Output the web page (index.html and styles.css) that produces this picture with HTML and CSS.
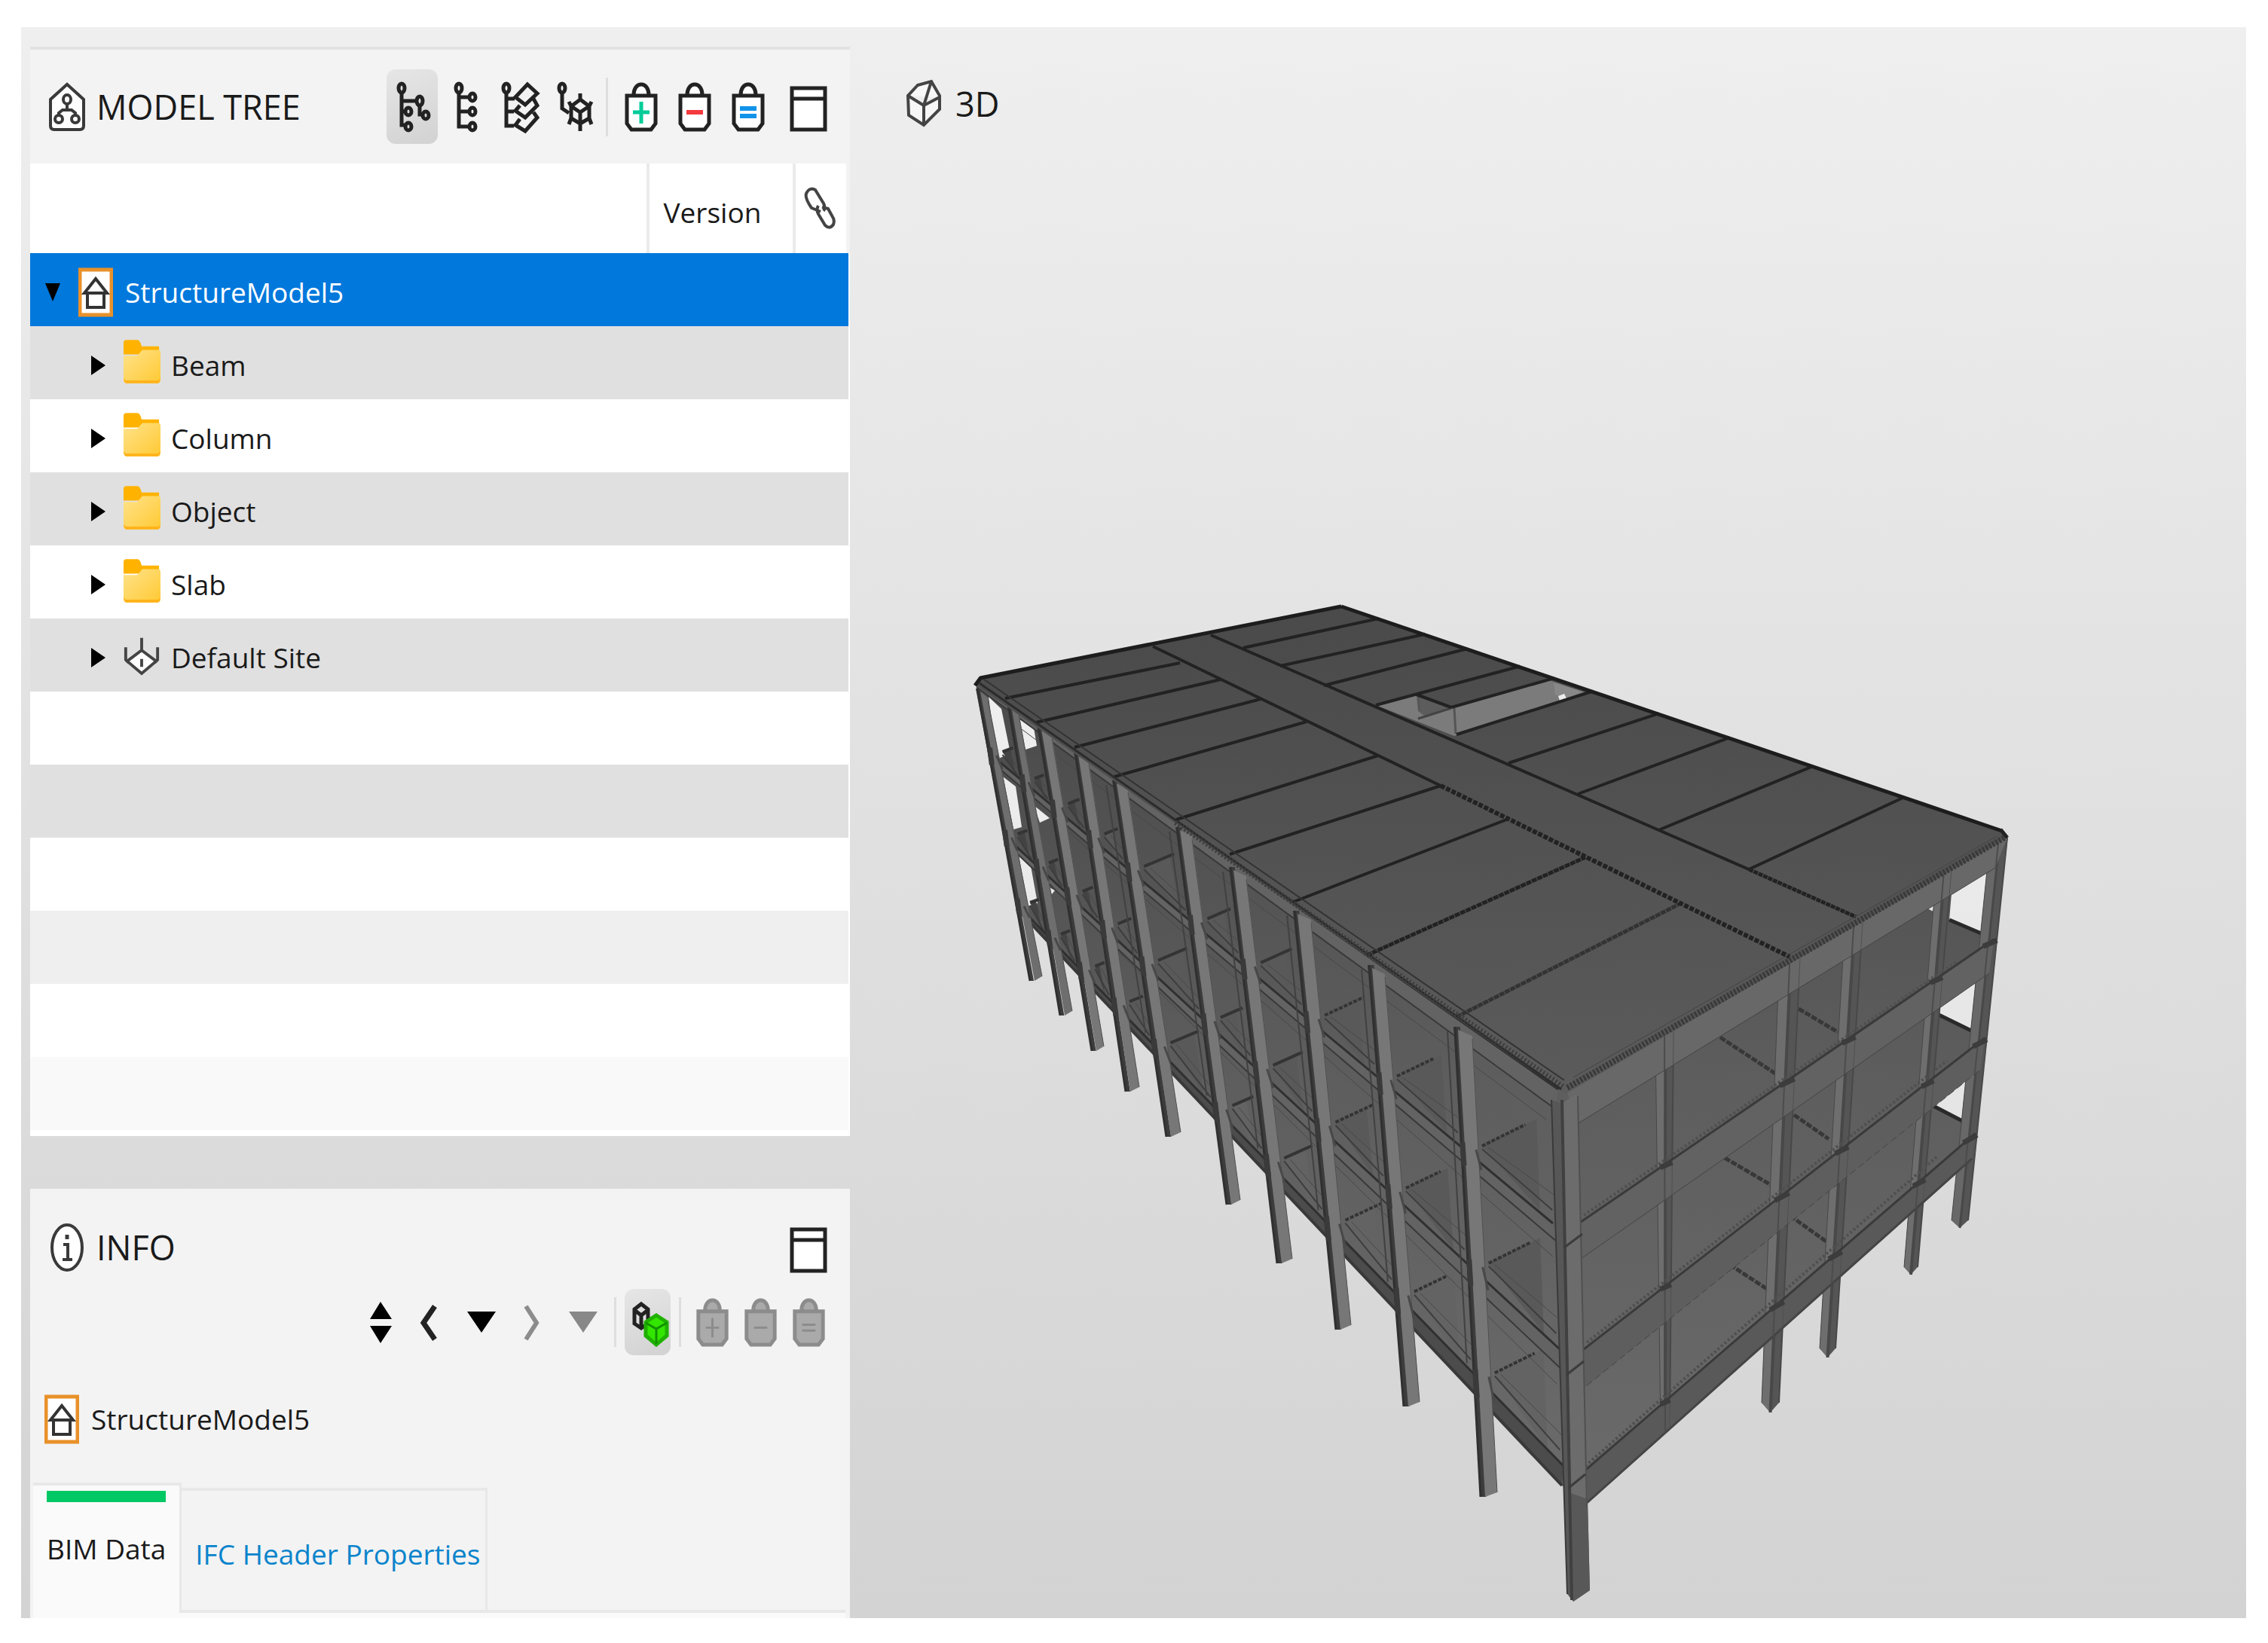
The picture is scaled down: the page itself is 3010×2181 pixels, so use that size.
FILE: index.html
```html
<!DOCTYPE html>
<html lang="en">
<head>
<meta charset="utf-8">
<title>StructureModel5</title>
<link rel="stylesheet" href="styles.css">
</head>
<body>
<svg class="defs" aria-hidden="true">
  <symbol id="i-bag" viewBox="0 0 68 99"><path d="M24 34C24 26 28 20 34 20S44 26 44 34" /><path d="M15 35H53V72L47 80H21L15 72Z"/></symbol>
  <symbol id="i-window" viewBox="0 0 68 99"><path d="M12 25H56V80H12Z" fill="#fff"/><path d="M12 39H56"/></symbol>
  <symbol id="i-folder" viewBox="0 0 52 60"><path d="M1 4Q1 0 5 0H20Q24 0 26 9H50V20H1Z" fill="#ffb300"/><path d="M1 22H20L27 14H49Q52 14 52 18V54Q52 60 48 60H5Q1 60 1 54Z" fill="url(#gold)"/><path d="M1 53Q2 60 5 60H48Q51 60 52 53L49 56H4Z" fill="#ffb31a"/></symbol>
  <symbol id="i-model" viewBox="0 0 46 66"><rect x="2" y="3" width="42" height="60" fill="#fff" stroke="#e8912a" stroke-width="5"/><path d="M8 34L23 15L38 34Z M12 34V53H34V34 M7 34H39" fill="none" stroke="#333" stroke-width="4"/></symbol>
  <linearGradient id="gold" x1="0" y1="0" x2="1" y2="1"><stop offset="0" stop-color="#ffe28a"/><stop offset="1" stop-color="#ffc933"/></linearGradient>
</svg>

<div class="app">
  <aside class="sidebar">
    <section class="panel tree">
      <header class="panel-head">
        <svg class="head-icon" viewBox="0 0 50 66"><path d="M25 3L47 23V58Q47 63 42 63H8Q3 63 3 58V23Z" fill="#fff"/><ellipse cx="25" cy="23" rx="5" ry="6"/><ellipse cx="14" cy="49" rx="5" ry="5"/><ellipse cx="36" cy="49" rx="5" ry="5"/><path d="M25 29V37M14 44V41L19 37H31L36 41V44"/></svg>
        <h2>MODEL TREE</h2>
        <div class="toolbar">
          <button class="tool on" aria-label="Tree view"><svg viewBox="0 0 68 99"><path d="M20 33V74H24M20 42H39M20 56H24M44 49V60H47"/><ellipse cx="20" cy="25" rx="4" ry="6"/><ellipse cx="44" cy="42" rx="4" ry="6"/><ellipse cx="52" cy="61" rx="4" ry="5"/><ellipse cx="29" cy="56" rx="4" ry="5"/><ellipse cx="29" cy="76" rx="4" ry="5"/></svg></button>
          <button class="tool" aria-label="Flat view"><svg viewBox="0 0 68 99"><path d="M25 33V76H38M25 37H38M25 56H38"/><ellipse cx="25" cy="25" rx="4" ry="6"/><ellipse cx="43" cy="37" rx="4" ry="5"/><ellipse cx="43" cy="56" rx="4" ry="5"/><ellipse cx="43" cy="76" rx="4" ry="5"/></svg></button>
          <button class="tool" aria-label="Layer view"><svg viewBox="0 0 68 99"><path d="M17 33V75H27M17 39H28M17 56H27"/><ellipse cx="17" cy="25" rx="4" ry="6"/><path d="M45 20L58 32L42 47L29 37ZM53 39L58 48L42 64L29 55L35 48M53 57L58 64L42 82L29 74L35 66"/></svg></button>
          <button class="tool" aria-label="Object view"><svg viewBox="0 0 68 99"><path d="M20 33V52L29 58"/><ellipse cx="20" cy="25" rx="4" ry="6"/><path d="M44 40L56 49V65L44 72L32 65V49ZM32 49L44 57L56 49M44 57V72M44 32V40M44 72V82M56 49L59 43M32 49L29 43M56 65L59 73M32 65L29 73"/></svg></button>
          <span class="sep"></span>
          <button class="tool" aria-label="Add"><svg viewBox="0 0 68 99"><use href="#i-bag" fill="#fff"/><path d="M34 43V72M23 57H45" stroke="#0c9" stroke-width="5"/></svg></button>
          <button class="tool" aria-label="Remove"><svg viewBox="0 0 68 99"><use href="#i-bag" fill="#fff"/><path d="M23 57H45" stroke="#f43a3f" stroke-width="6"/></svg></button>
          <button class="tool" aria-label="Set equal"><svg viewBox="0 0 68 99"><use href="#i-bag" fill="#fff"/><path d="M23 52H45M23 62H45" stroke="#1193ea" stroke-width="6"/></svg></button>
          <button class="tool apart" aria-label="Maximize"><svg viewBox="0 0 68 99"><use href="#i-window"/></svg></button>
        </div>
      </header>
      <table>
        <colgroup><col><col class="c-version"><col class="c-link"></colgroup>
        <thead><tr><th></th><th>Version</th><th><svg class="link" viewBox="0 0 44 58"><path d="M23 33L11 28Q2 15 4 9Q8 0 16 4L27 22Q30 28 27 32M20 25Q17 30 20 36L29 51Q35 57 40 50Q42 44 39 40L33 29L25 27"/></svg></th></tr></thead>
        <tbody>
          <tr class="selected"><td colspan="3"><div class="node"><svg class="arrow" viewBox="0 0 20 26"><path d="M0 1H20L10 25Z"/></svg><svg class="i-model"><use href="#i-model"/></svg><span>StructureModel5</span></div></td></tr>
          <tr><td colspan="3"><div class="node child"><svg class="arrow" viewBox="0 0 20 26"><path d="M1 0L20 13L1 26Z"/></svg><svg class="i-node"><use href="#i-folder"/></svg><span>Beam</span></div></td></tr>
          <tr><td colspan="3"><div class="node child"><svg class="arrow" viewBox="0 0 20 26"><path d="M1 0L20 13L1 26Z"/></svg><svg class="i-node"><use href="#i-folder"/></svg><span>Column</span></div></td></tr>
          <tr><td colspan="3"><div class="node child"><svg class="arrow" viewBox="0 0 20 26"><path d="M1 0L20 13L1 26Z"/></svg><svg class="i-node"><use href="#i-folder"/></svg><span>Object</span></div></td></tr>
          <tr><td colspan="3"><div class="node child"><svg class="arrow" viewBox="0 0 20 26"><path d="M1 0L20 13L1 26Z"/></svg><svg class="i-node"><use href="#i-folder"/></svg><span>Slab</span></div></td></tr>
          <tr><td colspan="3"><div class="node child"><svg class="arrow" viewBox="0 0 20 26"><path d="M1 0L20 13L1 26Z"/></svg><svg class="i-node site" viewBox="0 0 52 60"><path d="M26 25L46 40L26 57L6 40Z" fill="#fff"/><path d="M26 8V25M26 37V48M4 21V38L8 42M48 21V38L44 42"/></svg><span>Default Site</span></div></td></tr>
          <tr><td colspan="3"></td></tr>
          <tr class="fade1"><td colspan="3"></td></tr>
          <tr><td colspan="3"></td></tr>
          <tr class="fade2"><td colspan="3"></td></tr>
          <tr><td colspan="3"></td></tr>
          <tr class="fade3"><td colspan="3"></td></tr>
        </tbody>
      </table>
    </section>

    <section class="panel info">
      <header class="panel-head">
        <svg class="head-icon" viewBox="0 0 50 66"><ellipse cx="25" cy="33" rx="20" ry="30" fill="#fff"/><path d="M20 29H26V48M19 49H32"/><path d="M25 16V22" stroke-width="5"/></svg>
        <h2>INFO</h2>
        <div class="toolbar"><button class="tool" aria-label="Maximize"><svg viewBox="0 0 68 99"><use href="#i-window"/></svg></button></div>
      </header>
      <div class="nav">
        <button class="tool" aria-label="Up or down"><svg class="solid" viewBox="0 0 61 88"><path d="M30 17L45 40H16ZM16 49H45L30 72Z"/></svg></button>
        <button class="tool" aria-label="Previous"><svg viewBox="0 0 61 88"><path d="M35 23L20 45L35 67" stroke-width="7"/></svg></button>
        <button class="tool" aria-label="Previous list"><svg class="solid" viewBox="0 0 61 88"><path d="M11 30H49L30 58Z"/></svg></button>
        <button class="tool dim" aria-label="Next"><svg viewBox="0 0 61 88"><path d="M22 23L36 45L22 67" stroke-width="6"/></svg></button>
        <button class="tool dim" aria-label="Next list"><svg class="solid" viewBox="0 0 61 88"><path d="M12 30H50L31 58Z"/></svg></button>
        <span class="sep"></span>
        <button class="tool on" aria-label="Linked objects"><svg viewBox="0 0 61 88"><path d="M22 20L31 27V46L22 52L13 46V27ZM13 28L22 35L31 28M22 35V52" fill="#ddd"/><path d="M42 35L56 44V62L42 74L28 62V44Z" fill="#33e600" stroke="#20b000"/><path d="M28 45L42 53L56 45M42 53V73" stroke="#129000" stroke-width="3"/></svg></button>
        <span class="sep"></span>
        <button class="tool dim" aria-label="Add" disabled><svg viewBox="3 6 62 87"><use href="#i-bag" width="68" height="99" fill="#aaa"/><path d="M34 44V70M25 57H43" stroke-width="3"/></svg></button>
        <button class="tool dim" aria-label="Remove" disabled><svg viewBox="3 6 62 87"><use href="#i-bag" width="68" height="99" fill="#aaa"/><path d="M25 57H43" stroke-width="3"/></svg></button>
        <button class="tool dim" aria-label="Set equal" disabled><svg viewBox="3 6 62 87"><use href="#i-bag" width="68" height="99" fill="#aaa"/><path d="M25 53H43M25 61H43" stroke-width="3"/></svg></button>
      </div>
      <div class="model"><svg class="i-model"><use href="#i-model"/></svg><span>StructureModel5</span></div>
      <nav class="tabs">
        <a class="tab current" href="#bim">BIM Data</a>
        <a class="tab" href="#ifc">IFC Header Properties</a>
      </nav>
      <div class="tab-body" id="bim"></div>
    </section>
  </aside>

  <main class="view">
    <header class="view-head">
      <svg class="cube" viewBox="0 0 48 64"><path d="M34 3L45 22V40L24 61L4 48L3 22L16 8ZM3 22L24 35L45 24M24 35V61M34 3L24 35" /></svg>
      <h2>3D</h2>
    </header>
    <svg id="scene" viewBox="1128 200 1853 1948" role="img" aria-label="Structural frame"></svg>
  </main>
</div>
<script src="scene.js"></script>
</body>
</html>
```
FILE: styles.css
```css
* { box-sizing: border-box; }
body {
  margin: 0;
  background: #fff;
  color: #1a1a1a;
  font-family: "Open Sans", "Noto Sans", sans-serif;
  font-size: 37px;
  line-height: 56px;
}
.defs { position: absolute; width: 0; height: 0; }
h2 { margin: 0; font-size: 45px; font-weight: 400; }
button { padding: 0; border: 0; background: none; color: inherit; font: inherit; }

.app {
  display: grid;
  grid-template-columns: 1100fr 1853fr;
  min-height: calc(100vh - 69px);
  margin: 36px 29px 33px 28px;
  background: linear-gradient(#efefef, #e3e3e3 40%, #d3d3d3);
}
.sidebar {
  display: flex;
  flex-direction: column;
  gap: 70px;
  padding: 26px 0 0 12px;
}
.panel { background: #f3f3f3; }
.tree { border-top: 4px solid #e2e2e2; border-bottom: 8px solid #fff; }
.info { flex: 1; display: flex; flex-direction: column; }

.panel-head {
  display: flex;
  align-items: center;
  gap: 14px;
  height: 151px;
  padding: 0 21px 0 24px;
}
.info .panel-head { height: 133px; padding-top: 23px; }
.head-icon { width: 50px; height: 66px; fill: none; stroke: #3a3a3a; stroke-width: 4px; }
.toolbar, .nav { display: flex; align-items: center; justify-content: flex-end; }
.toolbar { gap: 3px; margin-left: auto; }
.tool { display: block; width: 68px; height: 99px; border-radius: 12px; }
.tool svg {
  display: block;
  width: 100%;
  height: 100%;
  fill: none;
  stroke: #222;
  stroke-width: 5px;
}
.tool .solid { fill: #000; stroke: none; }
.tool.on { background: linear-gradient(160deg, #e6e6e6, #d2d2d2); }
.tool.apart { margin-left: 9px; }
.tool.dim svg { stroke: #8c8c8c; }
.tool.dim .solid { fill: #888; stroke: none; }
.sep { width: 3px; height: 78px; margin: 0 7px; background: #dedede; }

.nav { gap: 6px; padding-right: 24px; }
.nav .tool { width: 61px; height: 88px; }
.nav .sep { height: 66px; margin: 0 5px; }
.nav .sep ~ .tool + .tool { margin-left: -3px; }

table { width: 100%; border-collapse: collapse; table-layout: fixed; background: #fff; }
.c-version { width: 194px; }
.c-link { width: 72px; }
th { height: 119px; padding: 10px 0 0; font-weight: 400; text-align: left; }
th + th { border-left: 4px solid #ebebeb; padding-left: 19px; }
th:last-child { padding: 0 0 0 10px; border-right: 5px solid #f3f3f3; }
.link { display: block; width: 44px; height: 58px; fill: none; stroke: #444; stroke-width: 4px; }
td { height: 97px; padding: 0; }
tbody tr:nth-child(even) { background: #e0e0e0; }
tbody .selected { background: #0078dc; color: #fff; }
tbody .fade1 { background: #e3e3e3; }
tbody tr.fade2 { background: #efefef; }
tbody tr.fade3 { background: #f9f9f9; }
.node { display: flex; align-items: center; padding: 6px 0 0 20px; }
.node.child { padding-left: 80px; }
.arrow { width: 20px; height: 26px; margin-right: 24px; fill: #000; }
.i-model { width: 46px; height: 66px; margin-right: 16px; }
.i-node { width: 50px; height: 60px; margin: 0 14px 10px 0; }
.child .arrow { margin-right: 23px; }
.site { fill: none; stroke: #444; stroke-width: 4px; }

.model { display: flex; align-items: center; height: 169px; padding-left: 19px; }
.tabs { display: flex; height: 169px; padding-left: 4px; }
.tab {
  margin-top: 7px;
  padding: 56px 6px 0 18px;
  border: solid #e8e8e8;
  border-width: 4px 3px 0 0;
  color: #0a84cc;
  text-decoration: none;
  white-space: nowrap;
}
.tab.current {
  z-index: 1;
  margin: 0 0 -4px;
  padding: 7px 18px 0;
  background: #fafafa;
  color: #1a1a1a;
}
.tab.current::before {
  content: "";
  display: block;
  height: 15px;
  margin-bottom: 34px;
  background: #00c864;
}
.tab-body { flex: 1; margin: 0 6px 0 4px; border-top: 4px solid #e8e8e8; background: #fafafa; }

.view-head { display: flex; align-items: flex-start; gap: 18px; height: 164px; padding: 69px 0 0 74px; }
.view-head h2 { padding-top: 5px; }
.cube { width: 48px; height: 64px; fill: #f7f7f7; stroke: #444; stroke-width: 4px; }
#scene { display: block; width: 100%; }
```
FILE: scene.js
```js
// Draws the concrete frame: four storeys, ten long-side bays, five short-side bays.
const out = [];
const pts = a => a.map(p => p.map(v => Math.round(v * 10) / 10).join(",")).join(" ");
const poly = (a, fill, stroke = "none", w = 0) =>
  out.push(`<polygon points="${pts(a)}" fill="${fill}" stroke="${stroke}" stroke-width="${w}"/>`);
const line = (a, b, w = 3, c = "#2a2a2a", dash = "") =>
  out.push(`<polyline points="${pts([a, b])}" fill="none" stroke="${c}" stroke-width="${w}" stroke-dasharray="${dash}"/>`);
const cross = ([a, b], [c, d]) => {
  const r = [b[0] - a[0], b[1] - a[1]], s = [d[0] - c[0], d[1] - c[1]];
  const t = ((c[0] - a[0]) * s[1] - (c[1] - a[1]) * s[0]) / (r[0] * s[1] - r[1] * s[0]);
  return [a[0] + r[0] * t, a[1] + r[1] * t];
};
const mix = (a, b, t) => [a[0] + (b[0] - a[0]) * t, a[1] + (b[1] - a[1]) * t];

out.push(`<defs>
<linearGradient id="roof" gradientUnits="userSpaceOnUse" x1="0" y1="850" x2="0" y2="1450"><stop offset="0" stop-color="#4b4b4b"/><stop offset="1" stop-color="#5b5b5b"/></linearGradient>
<linearGradient id="body" gradientUnits="userSpaceOnUse" x1="0" y1="950" x2="0" y2="1950"><stop offset="0" stop-color="#4c4c4c"/><stop offset=".5" stop-color="#5e5e5e"/><stop offset="1" stop-color="#6a6a6a"/></linearGradient>
<linearGradient id="sky" gradientUnits="userSpaceOnUse" x1="0" y1="900" x2="0" y2="1500"><stop offset="0" stop-color="#efefef"/><stop offset="1" stop-color="#e4e4e4"/></linearGradient>
</defs>`);

// Long side: column [top-left, top width, foot-left, foot width].
const longCols = [
  [[1296, 914], 15, [1367, 1302], 16], [[1337, 933], 15, [1407, 1348], 16],
  [[1377, 964], 19, [1449, 1395], 16], [[1426, 998], 19, [1494, 1449], 18],
  [[1477, 1036], 20, [1548, 1509], 19], [[1561, 1098], 21, [1628, 1599], 18],
  [[1632, 1151], 22, [1695, 1677], 20], [[1717, 1209], 23, [1773, 1765], 20],
  [[1816, 1281], 22, [1863, 1867], 21], [[1930, 1363], 24, [1965, 1987], 22]
];
// Floor edges on the long side: [upper edge, lower edge].
const longFloors = [
  [[[1296, 906], [2068, 1446]], [[1296, 912], [2064, 1472]]],
  [[[1319, 1005], [2061, 1624]], [[1319, 1014], [2073, 1654]]],
  [[[1337, 1113], [2070, 1791]], [[1337, 1121], [2078, 1823]]],
  [[[1354, 1205], [2075, 1946]], [[1354, 1211], [2073, 1972]]]
];
// Short side: columns [top-left, top-right, foot-left, foot-right, foot tip y].
const shortCols = [
  [[2197, 1385], [2221, 1371], [2204, 1898], [2216, 1888], 0],
  [[2361, 1290], [2389, 1272], [2338, 1862], [2361, 1862], 1875],
  [[2448, 1238], [2472, 1224], [2415, 1790], [2436, 1790], 1802],
  [[2569, 1168], [2590, 1154], [2527, 1682], [2545, 1682], 1692],
  [[2640, 1126], [2664, 1112], [2590, 1620], [2612, 1620], 1630]
];
const shortFloors = [
  [[[2080, 1450], [2664, 1112]], [[2093, 1492], [2648, 1152]]],
  [[[2098, 1624], [2646, 1249]], [[2098, 1671], [2640, 1292]]],
  [[[2102, 1793], [2634, 1380]], [[2095, 1848], [2628, 1420]]],
  [[[2100, 1957], [2621, 1507]], [[2105, 1996], [2617, 1538]]]
];

// Solid mass behind the frame.
poly([[1296, 910], [1354, 1208], [2073, 1972], [2105, 1996], [2617, 1538], [2662, 1112], [2076, 1440]], "url(#body)");

// Openings that show the background.
[
  [[1312, 925], [1329, 941], [1341, 1000], [1323, 1008]],
  [[1352, 954], [1372, 966], [1376, 990], [1361, 995]],
  [[1331, 1031], [1348, 1044], [1356, 1098], [1345, 1101]],
  [[1372, 1069], [1393, 1086], [1380, 1092]],
  [[1352, 1134], [1367, 1144], [1377, 1199], [1363, 1203]],
  [[1391, 1177], [1400, 1182], [1396, 1187]],
  [[2590, 1186], [2642, 1153], [2632, 1238], [2587, 1221]],
  [[2576, 1328], [2626, 1294], [2618, 1368], [2573, 1347]],
  [[2562, 1463], [2613, 1428], [2608, 1491], [2560, 1465]],
  [[2558, 1206], [2568, 1200], [2568, 1211]]
].forEach(p => poly(p, "url(#sky)"));
[[[2587, 1221], [2634, 1241]], [[2573, 1347], [2620, 1370]], [[2560, 1465], [2610, 1491]]].forEach(([a, b]) => line(a, b, 5));

const longLine = c => [c[0], c[2]];

// Slab seams and inner shadows seen through the long side.
for (let f = 1; f < 4; f++) {
  for (let k = 0; k < 10; k++) {
    const c = longCols[k], n = longCols[k + 1] ? longLine(longCols[k + 1]) : [[2059, 1460], [2075, 1972]];
    const a = cross(longLine(c), longFloors[f][0]);
    const b = cross(n, longFloors[f][0]);
    const s = 6 + k * 1.6, slope = .36 + k * .015;
    const p = [a[0] + c[1] + 4, a[1] - 1];
    const up = cross([p, [p[0] + 100, p[1] - 100 * slope]], n);
    poly([p, [up[0] - s, up[1] + s * slope], [b[0] - s, b[1] - s]], f === 3 && k > 4 ? "#636363" : k < 3 ? "#434343" : "#595959");
    const end = mix(p, up, k > 7 ? .62 : .85);
    line(p, end, 4, "#343434", k > 6 ? "5 2" : "");
    line([p[0], p[1] + 4], [b[0] - 4, b[1] - s], 2, "#3d3d3d");
    line([p[0] + 8, p[1] + 2], [b[0] - 2, b[1] - 2 * s], 1, "#484848");
  }
}

// Floor edge beams on the long side.
longFloors.forEach(([u, l], f) => {
  poly([u[0], u[1], l[1], l[0]], f === 3 ? "#4c4c4c" : "#636363");
  line(u[0], u[1], 3, "#303030");
  line(l[0], l[1], f === 3 ? 4 : 2, "#393939");
  if (f < 3) line([l[0][0] + 60, l[0][1] + 56], [l[1][0] - 12, l[1][1] + 14], 1, "#484848");
});

// Long side columns: light front face with a darker side face.
longCols.forEach(([t, tw, b, bw], k) => {
  const d = 5 + k * .3;
  poly([[t[0] - 1, t[1]], [t[0] + d, t[1]], [b[0] + d, b[1]], b, [b[0], b[1] - 5]], "#3c3c3c");
  poly([[t[0] + 5, t[1] + 4], [t[0] + tw, t[1] + 12], [b[0] + bw, b[1] - 6], [b[0] + 6, b[1]]], k < 2 ? "#6e6e6e" : "#777");
  line([t[0] + 1, t[1]], b, 3, "#303030");
  line([t[0] + tw, t[1] + 16], [b[0] + bw, b[1] - 6], 1, "#505050");
  if (k > 3) {
    const m = cross([t, b], longFloors[3][0]);
    line([t[0] - 9, t[1] + 6], [m[0] - 9, m[1] - 14], 2, "#414141");
  }
  longFloors.slice(1).forEach(([u, l]) => {
    const p = cross([t, b], u), q = cross([t, b], l);
    line([p[0] + 2, p[1] - 6], [q[0] + 3, q[1] + 6], 7, "#3a3a3a");
    // The beam's cut end shows at the right edge of each column.
    line([p[0] + tw - 4, p[1] + 4], [q[0] + tw + 2, q[1] + 12], 3, "#484848");
  });
});

// Inner slab edges seen through the short side.
[
  [[2283, 1377], [2356, 1425]], [[2387, 1339], [2439, 1370]],
  [[2289, 1537], [2352, 1574]], [[2381, 1480], [2427, 1512]],
  [[2296, 1679], [2345, 1711]], [[2376, 1614], [2425, 1649]]
].forEach(([a, b]) => line(a, b, 5, "#383838", "8 2"));

// Short side columns.
shortCols.forEach(([tl, tr, bl, br, tip], k) => {
  const mt = mix(tl, tr, .55), mb = mix(bl, br, .5);
  const foot = tip ? [[mb[0], tip]] : [];
  poly([tl, tr, br, ...foot, bl], "#555");
  poly([tl, mt, ...(tip ? foot : [mb]), bl], k === 4 ? "#686868" : "#6e6e6e");
  line(mt, tip ? foot[0] : mb, k === 4 ? 3 : 4, "#484848");
  line(tr, br, 2, "#484848");
  line(tl, bl, 1, "#484848");
});

// Short side beams.
shortFloors.forEach(([u, l], f) => {
  poly([u[0], u[1], l[1], l[0]], ["#686868", "#626262", "#5e5e5e", "#595959"][f]);
  line([u[0][0], u[0][1] - 2], [u[1][0], u[1][1] - 2], f ? 3 : 2, "#3a3a3a");
  if (f) line([u[0][0] + 4, u[0][1] - 11], [u[1][0] - 50, u[1][1] + 28], 4, "#505050", "3 3");
  line(l[0], l[1], f === 3 ? 3 : 1, "#444", f === 2 ? "9 5" : "");
  shortCols.forEach(c => {
    const mid = [mix(c[0], c[1], .5), mix(c[2], c[3], .5)];
    const p = cross(mid, u), q = cross(mid, l);
    const r = cross([c[1], c[3]], u), s = cross([c[1], c[3]], l);
    line(p, q, 2, "#4c4c4c");
    line(r, s, 1, "#505050");
    if (f) line([p[0] - 6, p[1] + 2], [r[0], r[1] + 2], 7, "#3c3c3c");
  });
});

// Front corner column.
poly([[2059, 1460], [2076, 1466], [2088, 2126], [2080, 2116]], "#575757");
poly([[2074, 1464], [2093, 1452], [2110, 2111], [2088, 2126]], "#6c6c6c");
poly([[2079, 1980], [2107, 1990], [2110, 2111], [2088, 2126]], "#585858");
line([2059, 1460], [2080, 2116], 2, "#3a3a3a");
line([2073, 1460], [2086, 2124], 4, "#404040");
line([2094, 1455], [2106, 2000], 2, "#505050");
[1656, 1825, 1975].forEach((y, i) => line([2076 + i * 3, y], [2100 + i * 2, y - 18], 3, "#3c3c3c"));

// Roof slabs.
poly([[1293, 908], [1301, 899], [1780, 804], [2657, 1102], [2664, 1111], [2078, 1452]], "url(#roof)");

// Stair opening.
poly([[1826, 936], [1880, 923], [1926, 939], [2056, 903], [2106, 920], [1930, 977]], "#7b7b7b");
poly([[1880, 923], [1926, 939], [1893, 952], [1882, 944]], "#5c5c5c");
poly([[2062, 906], [2100, 918], [2078, 928], [2064, 922]], "#888");
poly([[2068, 924], [2076, 921], [2079, 927], [2070, 930]], "#eee");
line([1882, 954], [1926, 940], 3, "#444");
line([1930, 940], [1932, 974], 3, "#555");
line([1882, 924], [1884, 944], 2, "#555");

// Joints between roof slabs, left of the walkway.
[
  [[1334, 927], [1566, 880]], [[1375, 959], [1620, 902]], [[1426, 992], [1673, 928]],
  [[1479, 1031], [1734, 958]], [[1561, 1088], [1829, 1003]], [[1632, 1134], [1912, 1043]],
  [[1717, 1197], [2002, 1087]], [[1814, 1268], [2104, 1138]], [[1933, 1350], [2229, 1200]]
].forEach(([a, b], i) => line(a, b, i > 6 ? 5 : 4, i > 7 ? "#333" : "#222", i > 6 ? "7 1" : ""));
// Joints right of the walkway run out to the rear edge.
const rear = [[1780, 804], [2657, 1102]];
[
  [[1650, 860], [1816, 824]], [[1699, 884], [1877, 845]], [[1757, 910], [1936, 864]],
  [[1826, 936], [2000, 889]], [[1926, 939], [2056, 902]], [[1933, 975], [2106, 920]],
  [[2002, 1013], [2196, 949]], [[2094, 1054], [2290, 981]], [[2201, 1102], [2399, 1020]],
  [[2321, 1154], [2519, 1062]]
].forEach(j => line(j[0], cross(j, rear), 4, "#222"));
line([1880, 922], [1926, 939], 4, "#222");
line([1530, 858], [1912, 1043], 4, "#222");
line([1912, 1043], [2375, 1270], 6, "#222", "6 2");
line([1607, 843], [2321, 1154], 4, "#222");
line([2321, 1154], [2463, 1217], 5, "#222", "6 1");

// Roof rim with its fine joints.
line([1301, 900], [1780, 805], 5, "#1d1d1d");
line([1780, 805], [2657, 1103], 5, "#1d1d1d");
line([2655, 1101], [2664, 1112], 5, "#222");
line([1294, 910], [1302, 899], 5, "#1d1d1d");
line([1306, 902], [2076, 1434], 2, "#333");
line([1300, 907], [2072, 1446], 3, "#2c2c2c");
line([1560, 1092], [2074, 1442], 7, "#3c3c3c", "2 3");
line([2080, 1444], [2660, 1112], 8, "#3a3a3a", "3 2");
line([2088, 1430], [2650, 1110], 1, "#444");

document.getElementById("scene").innerHTML = out.join("");
```
